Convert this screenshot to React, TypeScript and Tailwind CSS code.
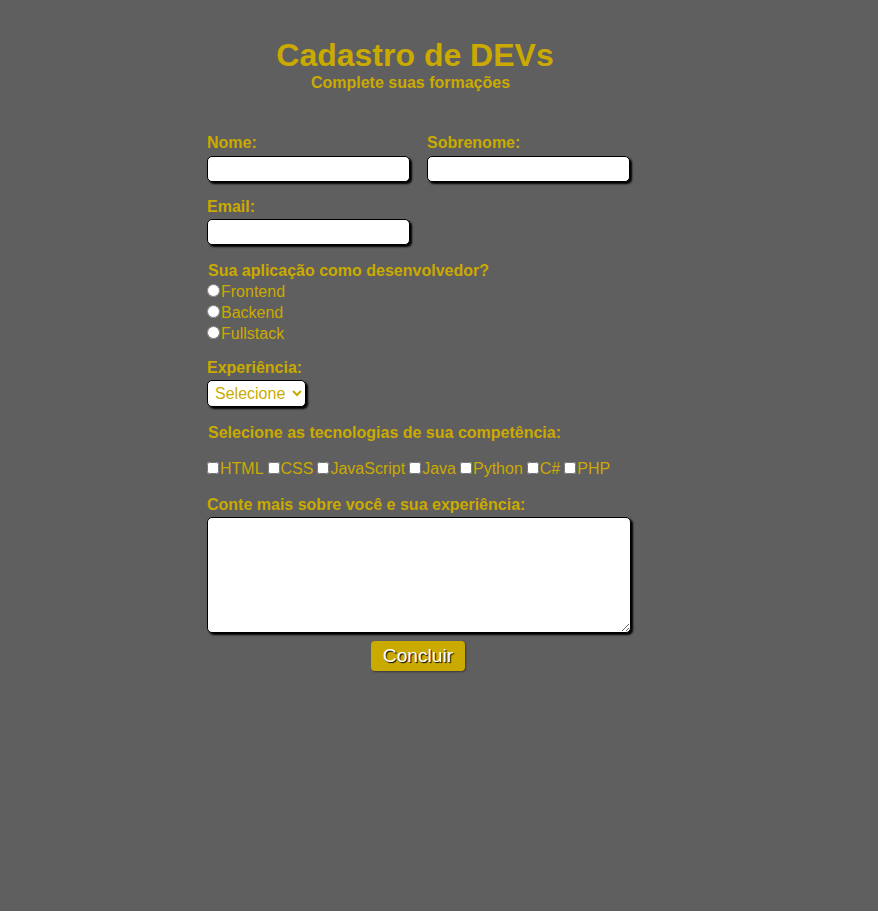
import React from "react";

const Y = "text-[#cbaa00]";

export default function App() {
  return (
    <div
      className="w-full h-[911px] bg-[#5f5f5f] overflow-hidden"
      style={{ fontFamily: '"Liberation Sans", Arial, sans-serif' }}
    >
      <div className="w-[424px] ml-[207px] pt-[37px]">
        <header className={`flex flex-col items-center pr-[8px] ${Y}`}>
          <h1 className="text-[32px] font-bold leading-[37px]">Cadastro de DEVs</h1>
          <p className="text-[16px] font-bold leading-[18px] pr-[9px]">Complete suas formações</p>
        </header>

        <form className={`mt-[42px] ${Y}`} onSubmit={(e) => e.preventDefault()}>
          <div className="flex gap-[17px]">
            <div className="flex flex-col">
              <label className="text-[16px] font-bold leading-[18px] mb-[4px]">Nome:</label>
              <input
                type="text"
                className="w-[203px] h-[26px] bg-white border border-black rounded-[5px] shadow-[2px_2px_2px_#000] text-black px-1"
              />
            </div>
            <div className="flex flex-col">
              <label className="text-[16px] font-bold leading-[18px] mb-[4px]">Sobrenome:</label>
              <input
                type="text"
                className="w-[203px] h-[26px] bg-white border border-black rounded-[5px] shadow-[2px_2px_2px_#000] text-black px-1"
              />
            </div>
          </div>

          <div className="flex flex-col mt-[16px]">
            <label className="text-[16px] font-bold leading-[18px] mb-[3px]">Email:</label>
            <input
              type="email"
              className="w-[203px] h-[26px] bg-white border border-black rounded-[5px] shadow-[2px_2px_2px_#000] text-black px-1"
            />
          </div>

          <div className="mt-[16px]">
            <p className="text-[16px] font-bold leading-[20px] pl-[1px]">Sua aplicação como desenvolvedor?</p>
            {["Frontend", "Backend", "Fullstack"].map((v) => (
              <label key={v} className="flex items-center h-[21px] text-[16px]">
                <input type="radio" name="app" className="w-[13px] h-[13px] m-0 -mt-[2px]" />
                <span className="ml-[1px]">{v}</span>
              </label>
            ))}
          </div>

          <div className="flex flex-col mt-[15px] items-start">
            <label className="text-[16px] font-bold leading-[18px] mb-[3px]">Experiência:</label>
            <select className="w-[99px] h-[27px] bg-white border border-black rounded-[5px] shadow-[2px_2px_2px_#000] text-[16px] text-[#cbaa00] pl-[3px]">
              <option>Selecione</option>
              <option>Júnior</option>
              <option>Pleno</option>
              <option>Sênior</option>
            </select>
          </div>

          <div className="mt-[17px]">
            <p className="text-[16px] font-bold leading-[18px] pl-[1px]">Selecione as tecnologias de sua competência:</p>
            <div className="mt-[18px] text-[16px] leading-[18px] flex items-center flex-wrap">
              {["HTML", "CSS", "JavaScript", "Java", "Python", "C#", "PHP"].map((t) => (
                <label key={t} className="inline-flex items-center mr-[4px]">
                  <input type="checkbox" className="w-[12px] h-[12px] m-0 -mt-[3px]" />
                  <span className="ml-[1px]">{t}</span>
                </label>
              ))}
            </div>
          </div>

          <div className="flex flex-col mt-[18px]">
            <label className="text-[16px] font-bold leading-[18px] mb-[3px]">Conte mais sobre você e sua experiência:</label>
            <textarea className="w-[424px] h-[116px] bg-white border border-black rounded-[5px] shadow-[2px_2px_2px_#000] text-black p-1" />
          </div>

          <div className="flex justify-center mt-[8px] pr-[2px]">
            <button
              type="submit"
              className="h-[30px] px-[12px] bg-[#cbaa00] rounded-[4px] text-white text-[19.2px] leading-[22px] shadow-[1px_1px_2px_rgba(0,0,0,0.4)] [text-shadow:1px_1px_1px_#000]"
            >
              Concluir
            </button>
          </div>
        </form>
      </div>
    </div>
  );
}
